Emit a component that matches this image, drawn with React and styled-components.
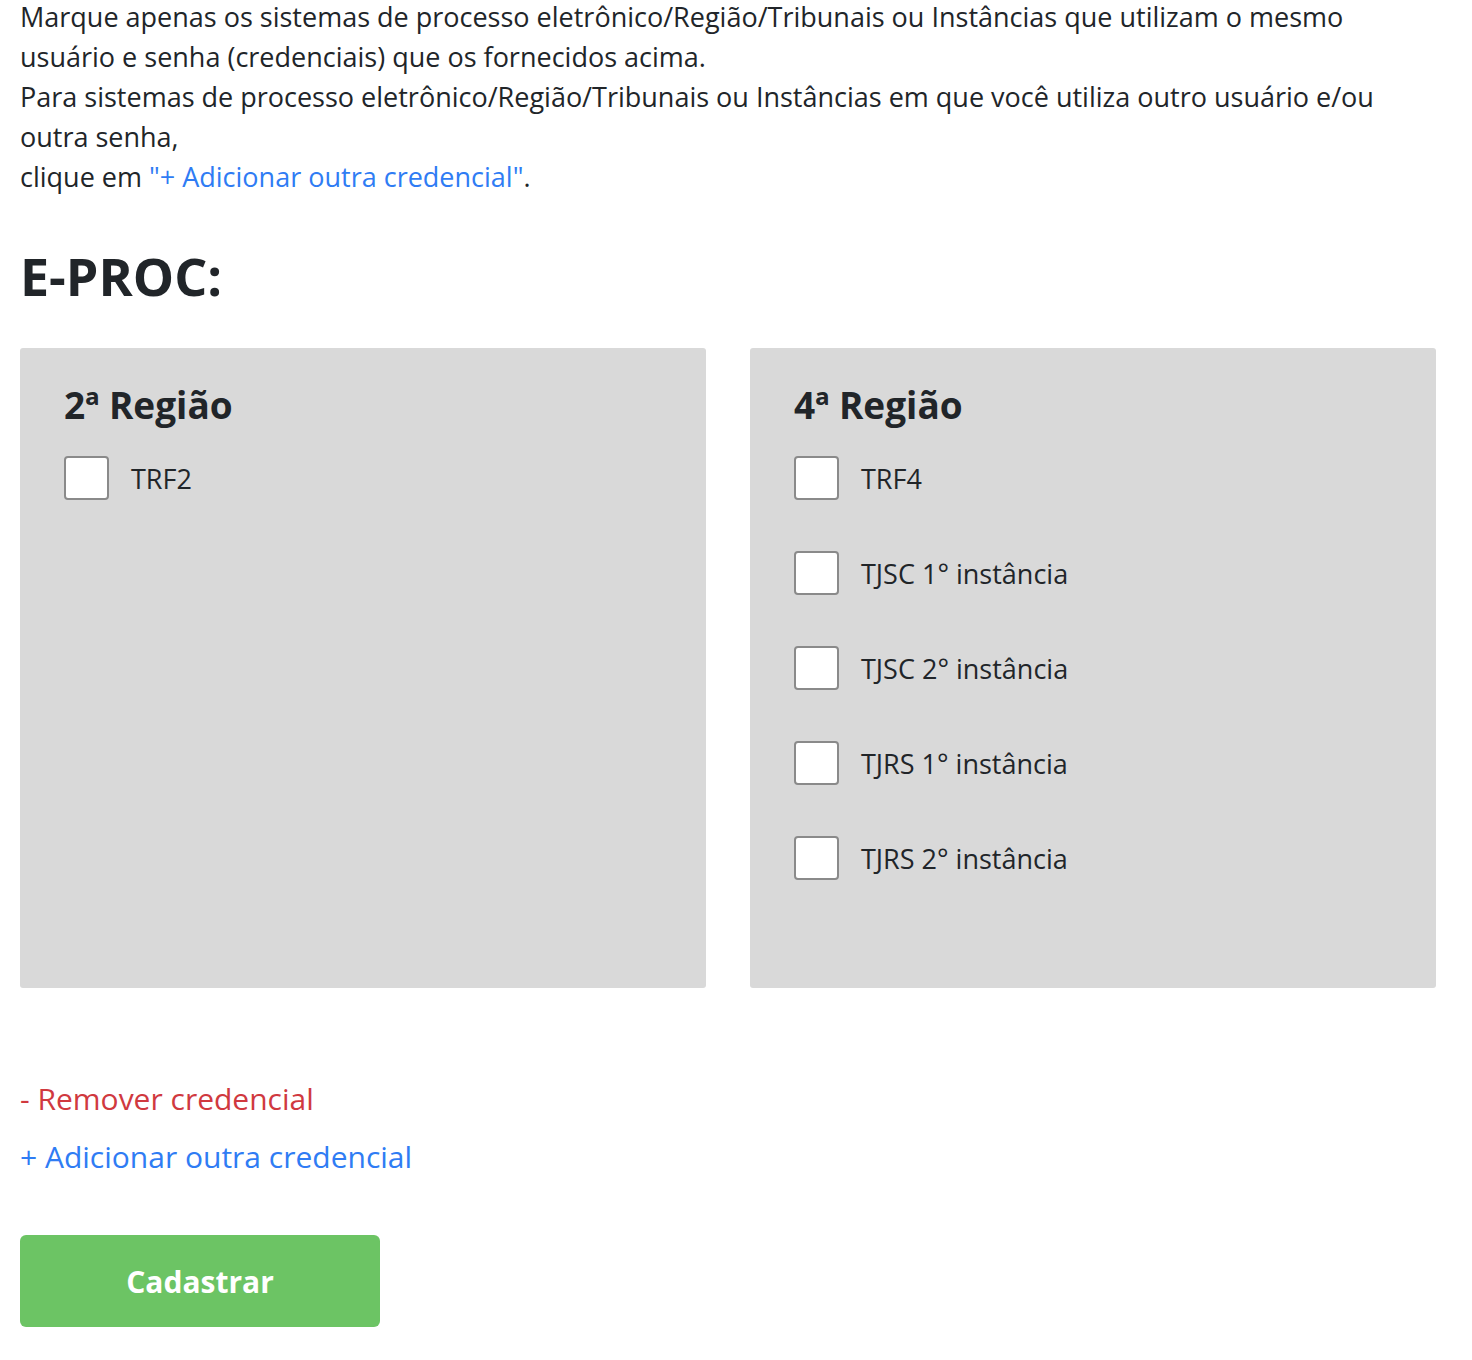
import React from 'react'
import styled, {createGlobalStyle} from 'styled-components'

const GlobalStyle = createGlobalStyle`
body {
  margin: 0;
  background: #ffffff;
  font-family: "Open Sans", "Liberation Sans", sans-serif;
  color: #212529;
}
`
const Page = styled.div`
padding: 0 36px 0 20px;
margin-top: -3px;
`
const Intro = styled.p`
margin: 0;
font-size: 27px;
line-height: 40px;
`
const InlineLink = styled.a`
color: #2f7cf4;
text-decoration: none;
`
const Title = styled.h1`
margin: 43px 0 0;
font-size: 52px;
font-weight: 700;
line-height: 72px;
`
const Panels = styled.div`
display: grid;
grid-template-columns: 1fr 1fr;
gap: 44px;
margin-top: 36px;
`
const Panel = styled.div`
background: #d9d9d9;
border-radius: 3px;
height: 640px;
box-sizing: border-box;
padding: 30px 44px;
`
const PanelTitle = styled.h2`
margin: 0 0 24px;
font-size: 37px;
font-weight: 700;
line-height: 54px;
`
const Option = styled.label`
display: flex;
align-items: center;
gap: 22px;
height: 44px;
margin-bottom: ${p => p.last ? 0 : '51px'};
font-size: 27px;
cursor: pointer;
`
const Box = styled.span`
width: 45px;
height: 44px;
box-sizing: border-box;
border: 2px solid #8a8a8a;
border-radius: 4px;
background: #ffffff;
flex-shrink: 0;
`
const Actions = styled.div`
display: flex;
flex-direction: column;
gap: 22px;
margin-top: 93px;
font-size: 30px;
line-height: 36px;
`
const ActionLink = styled.a`
color: ${p => p.danger ? '#d0393f' : '#2f7cf4'};
text-decoration: none;
cursor: pointer;
`
const SubmitBtn = styled.button`
margin-top: 60px;
width: 360px;
height: 92px;
border: none;
border-radius: 6px;
background: #6cc464;
color: #ffffff;
font-family: "Open Sans", "Liberation Sans", sans-serif;
font-size: 30px;
font-weight: 700;
cursor: pointer;
`

const regions = [
  {title: '2ª Região', items: ['TRF2']},
  {title: '4ª Região', items: ['TRF4', 'TJSC 1° instância', 'TJSC 2° instância', 'TJRS 1° instância', 'TJRS 2° instância']},
]

export default function App(){
  return(
    <Page>
      <GlobalStyle />
      <Intro>
        Marque apenas os sistemas de processo eletrônico/Região/Tribunais ou Instâncias que utilizam o mesmo usuário e senha (credenciais) que os fornecidos acima.
        <br />
        Para sistemas de processo eletrônico/Região/Tribunais ou Instâncias em que você utiliza outro usuário e/ou outra senha,
        <br />
        clique em <InlineLink>"+ Adicionar outra credencial"</InlineLink>.
      </Intro>
      <Title>E-PROC:</Title>
      <Panels>
        {regions.map(r => (
          <Panel key={r.title}>
            <PanelTitle>{r.title}</PanelTitle>
            {r.items.map((item, i) => (
              <Option key={item} last={i === r.items.length - 1}>
                <Box />
                {item}
              </Option>
            ))}
          </Panel>
        ))}
      </Panels>
      <Actions>
        <ActionLink danger>- Remover credencial</ActionLink>
        <ActionLink>+ Adicionar outra credencial</ActionLink>
      </Actions>
      <SubmitBtn>Cadastrar</SubmitBtn>
    </Page>
  )
}
